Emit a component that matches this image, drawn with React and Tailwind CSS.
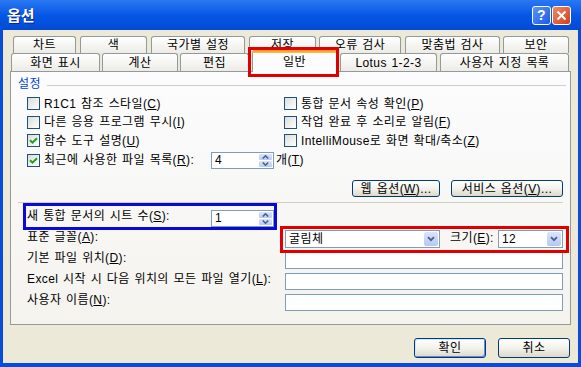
import React from "react";

function Check({ checked }) {
  return (
    <span className="w-[13px] h-[13px] shrink-0 border border-[#1c5180] bg-linear-to-br from-[#dcdcd7] to-white flex items-center justify-center">
      {checked && (
        <svg width="9" height="9" viewBox="0 0 9 9">
          <path d="M1 4.2 L3.5 6.7 L8 2.2" stroke="#21a121" strokeWidth="2" fill="none" />
        </svg>
      )}
    </span>
  );
}

function Spin({ value }) {
  return (
    <div className="w-[63px] h-[17px] shrink-0 border border-[#7f9db9] bg-white flex">
      <span className="flex-1 pl-[3px] leading-[15px]">{value}</span>
      <div className="w-[15px] flex flex-col p-px gap-px">
        <div className="flex-1 rounded-[1px] bg-linear-to-b from-[#d9e4fd] to-[#b7cbf8] flex items-center justify-center">
          <svg width="7" height="4" viewBox="0 0 7 4">
            <path d="M0.8 3.5 L3.5 0.8 L6.2 3.5" stroke="#4d6185" strokeWidth="1.6" fill="none" />
          </svg>
        </div>
        <div className="flex-1 rounded-[1px] bg-linear-to-b from-[#d9e4fd] to-[#b7cbf8] flex items-center justify-center">
          <svg width="7" height="4" viewBox="0 0 7 4">
            <path d="M0.8 0.5 L3.5 3.2 L6.2 0.5" stroke="#4d6185" strokeWidth="1.6" fill="none" />
          </svg>
        </div>
      </div>
    </div>
  );
}

function Combo({ value, className }) {
  return (
    <div className={"h-[18px] shrink-0 border border-[#7f9db9] bg-white flex " + className}>
      <span className="flex-1 pl-[3px] leading-[16px]">{value}</span>
      <div className="w-[16px] p-px flex">
        <div className="flex-1 rounded-[2px] bg-linear-to-b from-[#dae5fd] to-[#b4c8f6] flex items-center justify-center">
          <svg width="8" height="6" viewBox="0 0 8 6">
            <path d="M1 1.2 L4 4.2 L7 1.2" stroke="#4d6185" strokeWidth="1.8" fill="none" />
          </svg>
        </div>
      </div>
    </div>
  );
}

function Input() {
  return <div className="w-[278px] h-[17px] shrink-0 border border-[#7f9db9] bg-white" />;
}

function XPButton({ children, className }) {
  return (
    <div
      className={
        "shrink-0 border border-[#003c74] rounded-[3px] bg-linear-to-b from-white via-[#f3f2ec] to-[#dcd8ca] flex items-center justify-center leading-[14px] " +
        className
      }
    >
      {children}
    </div>
  );
}

function U({ children }) {
  return <span className="underline">{children}</span>;
}

function Tab({ children, className }) {
  return (
    <div
      className={
        "shrink-0 border border-[#919b9c] border-b-0 rounded-t-[3px] bg-linear-to-b from-white to-[#ecebe6] flex items-center justify-center leading-[14px] " +
        className
      }
    >
      {children}
    </div>
  );
}

export default function App() {
  return (
    <div className="relative w-[581px] h-[367px] bg-[#0b4bdc] flex flex-col text-[12px] text-black font-['Liberation_Sans','Noto_Sans_CJK_KR',sans-serif] tracking-[0.4px] [word-spacing:1px] overflow-hidden">
      {/* Title bar */}
      <div className="h-[30px] shrink-0 bg-linear-to-b from-[#2a78f2] via-[#0557e6] to-[#0449d4] flex items-center pl-[7px] pr-[10px]">
        <span className="text-white font-bold text-[15px] tracking-normal [text-shadow:1px_1px_0_#0a2a8a] font-['Noto_Sans_CJK_KR',sans-serif]">
          옵션
        </span>
        <div className="flex-1" />
        <div className="w-[19px] h-[19px] rounded-[3px] border border-white bg-linear-to-br from-[#5a95fb] to-[#1f58e0] flex items-center justify-center text-white font-bold text-[14px] leading-none">
          ?
        </div>
        <div className="w-[19px] h-[19px] ml-px rounded-[3px] border border-white bg-linear-to-br from-[#ee8a67] to-[#cf3c10] flex items-center justify-center">
          <svg width="11" height="11" viewBox="0 0 11 11">
            <path d="M1.5 1.5 L9.5 9.5 M9.5 1.5 L1.5 9.5" stroke="white" strokeWidth="2" />
          </svg>
        </div>
      </div>

      {/* Body */}
      <div className="flex-1 mx-[3px] mb-[4px] bg-[#ece9d8] flex flex-col pt-[6px]">
        {/* Tabs row 1 */}
        <div className="ml-[7px] h-[17px] flex">
          <Tab className="h-[17px] ml-[3px] w-[63px]">차트</Tab>
          <Tab className="h-[17px] ml-[4px] w-[67px]">색</Tab>
          <Tab className="h-[17px] ml-[4px] w-[94px]">국가별 설정</Tab>
          <Tab className="h-[17px] ml-[4px] w-[67px]">저장</Tab>
          <Tab className="h-[17px] ml-[3px] w-[82px]">오류 검사</Tab>
          <Tab className="h-[17px] ml-[4px] w-[95px]">맞춤법 검사</Tab>
          <Tab className="h-[17px] ml-[3px] w-[66px]">보안</Tab>
        </div>
        {/* Tabs row 2 */}
        <div className="ml-[7px] h-[18px] flex items-end relative z-10">
          <Tab className="h-[18px] ml-px w-[89px]">화면 표시</Tab>
          <Tab className="h-[18px] ml-[2px] w-[76px]">계산</Tab>
          <Tab className="h-[18px] ml-[2px] w-[69px]">편집</Tab>
          <div className="ml-[3px] w-[85px] h-[22px] -mb-px shrink-0 border border-[#919b9c] border-t-0 border-b-0 rounded-t-[3px] bg-[#fcfcfe] flex flex-col">
            <div className="h-[3px] -mx-px rounded-t-[3px] bg-linear-to-b from-[#e68b2c] to-[#ffc73c]" />
            <div className="flex-1 flex items-center justify-center leading-[14px] pb-[2px]">일반</div>
          </div>
          <Tab className="h-[18px] ml-[3px] w-[97px]">Lotus 1-2-3</Tab>
          <Tab className="h-[18px] ml-[3px] w-[129px]">사용자 지정 목록</Tab>
        </div>

        {/* Panel */}
        <div className="ml-[7px] w-[561px] h-[254px] shrink-0 border border-[#919b9c] bg-linear-to-b from-[#fcfcfe] to-[#f4f3ee] flex flex-col">
          <div className="mt-[5px] h-[14px] flex items-center pl-[7px] pr-[4px]">
            <span className="text-[#0046d5] leading-[14px]">설정</span>
            <div className="flex-1 h-px bg-[#d0d0bf] ml-[6px] mt-[3px]" />
          </div>

          <div className="mt-[3px] flex flex-col pl-[16px]">
            <div className="h-[19px] flex items-center">
              <div className="w-[257px] flex items-center gap-[4px]">
                <Check />
                <span>
                  R1C1 참조 스타일(<U>C</U>)
                </span>
              </div>
              <div className="flex items-center gap-[4px]">
                <Check />
                <span>
                  통합 문서 속성 확인(<U>P</U>)
                </span>
              </div>
            </div>
            <div className="h-[18px] flex items-center">
              <div className="w-[257px] flex items-center gap-[4px]">
                <Check />
                <span>
                  다른 응용 프로그램 무시(<U>I</U>)
                </span>
              </div>
              <div className="flex items-center gap-[4px]">
                <Check />
                <span>
                  작업 완료 후 소리로 알림(<U>F</U>)
                </span>
              </div>
            </div>
            <div className="h-[19px] flex items-center">
              <div className="w-[257px] flex items-center gap-[4px]">
                <Check checked />
                <span>
                  함수 도구 설명(<U>U</U>)
                </span>
              </div>
              <div className="flex items-center gap-[4px]">
                <Check />
                <span>
                  IntelliMouse로 화면 확대/축소(<U>Z</U>)
                </span>
              </div>
            </div>
            <div className="h-[20px] flex items-center">
              <div className="w-[184px] flex items-center gap-[4px]">
                <Check checked />
                <span className="whitespace-nowrap">
                  최근에 사용한 파일 목록(<U>R</U>):
                </span>
              </div>
              <Spin value="4" />
              <span className="ml-[2px]">
                개(<U>T</U>)
              </span>
            </div>
          </div>

          <div className="mt-[10px] h-[17px] flex justify-end gap-[11px] pr-[7px]">
            <XPButton className="w-[88px] h-[17px]">
              웹 옵션(<U>W</U>)...
            </XPButton>
            <XPButton className="w-[112px] h-[17px]">
              서비스 옵션(<U>V</U>)...
            </XPButton>
          </div>

          <div className="mt-[5px] h-px mx-[7px] bg-[#d0d0bf]" />

          <div className="mt-[7px] h-[17px] flex items-start pl-[16px]">
            <span className="w-[184px] -mt-px leading-[14px] whitespace-nowrap">
              새 통합 문서의 시트 수(<U>S</U>):
            </span>
            <Spin value="1" />
          </div>

          <div className="mt-[3px] h-[18px] flex items-start pl-[16px]">
            <span className="w-[258px] leading-[14px]">
              표준 글꼴(<U>A</U>):
            </span>
            <Combo value="굴림체" className="w-[155px]" />
            <span className="ml-[10px] w-[48px] leading-[16px] whitespace-nowrap">
              크기(<U>E</U>):
            </span>
            <Combo value="12" className="w-[65px]" />
          </div>

          <div className="mt-[4px] h-[17px] flex items-start pl-[16px]">
            <span className="w-[258px] -mt-px leading-[14px]">
              기본 파일 위치(<U>D</U>):
            </span>
            <Input />
          </div>
          <div className="mt-[4px] h-[17px] flex items-start pl-[16px]">
            <span className="w-[258px] -mt-px leading-[14px] whitespace-nowrap">
              Excel 시작 시 다음 위치의 모든 파일 열기(<U>L</U>):
            </span>
            <Input />
          </div>
          <div className="mt-[4px] h-[17px] flex items-start pl-[16px]">
            <span className="w-[258px] -mt-px leading-[14px]">
              사용자 이름(<U>N</U>):
            </span>
            <Input />
          </div>
        </div>

        <div className="mt-[13px] h-[20px] flex justify-end gap-[12px] pr-[8px]">
          <XPButton className="w-[72px] h-[20px] shadow-[inset_1px_1px_0_#cee7ff,inset_-1px_-1px_0_#6982ee]">확인</XPButton>
          <XPButton className="w-[72px] h-[20px]">취소</XPButton>
        </div>
      </div>

      {/* Annotation overlays */}
      <div className="absolute left-[248px] top-[47px] w-[91px] h-[30px] border-[3px] border-[#e00000] z-20" />
      <div className="absolute left-[23px] top-[203px] w-[254px] h-[27px] border-[3px] border-[#0a0ad8] z-20" />
      <div className="absolute left-[280px] top-[226px] w-[289px] h-[27px] border-[3px] border-[#e00000] z-20" />
    </div>
  );
}
